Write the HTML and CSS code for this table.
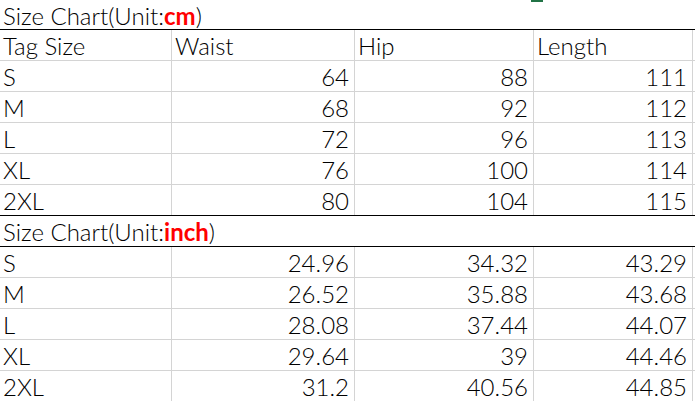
FILE: index.html
```html
<!DOCTYPE html>
<html>
<head>
<meta charset="utf-8">
<link rel="stylesheet" href="styles.css">
</head>
<body>
<div class="sheet">
  <span class="handle"></span>
  <div class="row title first"><div class="cell">Size Chart(Unit:<b class="unit">cm</b>)</div></div>
  <div class="row"><div class="cell">Tag Size</div><div class="cell">Waist</div><div class="cell">Hip</div><div class="cell">Length</div><div class="cell pad"></div></div>
  <div class="row"><div class="cell">S</div><div class="cell num">64</div><div class="cell num">88</div><div class="cell num">111</div><div class="cell pad"></div></div>
  <div class="row"><div class="cell">M</div><div class="cell num">68</div><div class="cell num">92</div><div class="cell num">112</div><div class="cell pad"></div></div>
  <div class="row"><div class="cell">L</div><div class="cell num">72</div><div class="cell num">96</div><div class="cell num">113</div><div class="cell pad"></div></div>
  <div class="row"><div class="cell">XL</div><div class="cell num">76</div><div class="cell num">100</div><div class="cell num">114</div><div class="cell pad"></div></div>
  <div class="row end"><div class="cell">2XL</div><div class="cell num">80</div><div class="cell num">104</div><div class="cell num">115</div><div class="cell pad"></div></div>
  <div class="row title"><div class="cell">Size Chart(Unit:<b class="unit">inch</b>)</div></div>
  <div class="row"><div class="cell">S</div><div class="cell num">24.96</div><div class="cell num">34.32</div><div class="cell num">43.29</div><div class="cell pad"></div></div>
  <div class="row"><div class="cell">M</div><div class="cell num">26.52</div><div class="cell num">35.88</div><div class="cell num">43.68</div><div class="cell pad"></div></div>
  <div class="row"><div class="cell">L</div><div class="cell num">28.08</div><div class="cell num">37.44</div><div class="cell num">44.07</div><div class="cell pad"></div></div>
  <div class="row"><div class="cell">XL</div><div class="cell num">29.64</div><div class="cell num">39</div><div class="cell num">44.46</div><div class="cell pad"></div></div>
  <div class="row"><div class="cell">2XL</div><div class="cell num">31.2</div><div class="cell num">40.56</div><div class="cell num">44.85</div><div class="cell pad"></div></div>
</div>
</body>
</html>
```
FILE: styles.css
```css
html, body {
  margin: 0;
  padding: 0;
  background: #fff;
}
.sheet {
  position: relative;
  width: 695px;
  height: 401px;
  overflow: hidden;
  font-family: Lato, "Noto Sans", sans-serif;
  font-weight: 300;
  font-size: 24px;
  color: #000;
}
.handle {
  position: absolute;
  left: 531px;
  top: 0;
  width: 12px;
  height: 2px;
  background: #217346;
}
.row {
  display: grid;
  grid-template-columns: 172px 183px 179px 159px 2px;
  height: 31px;
  box-sizing: border-box;
  border-bottom: 1px solid #d4d4d4;
}
.row.title {
  grid-template-columns: 1fr;
  border-bottom: 1px solid #000;
}
.row.first {
  height: 30px;
}
.row.end {
  border-bottom: 1px solid #000;
}
.cell {
  box-sizing: border-box;
  border-right: 1px solid #d4d4d4;
  padding: 1px 5px 0 3px;
  line-height: 29px;
  white-space: nowrap;
}
.title .cell {
  border-right: none;
}
.cell.pad {
  border-right: none;
  padding: 0;
}
.num {
  text-align: right;
}
.unit {
  color: #ff0000;
  font-weight: bold;
}
```
